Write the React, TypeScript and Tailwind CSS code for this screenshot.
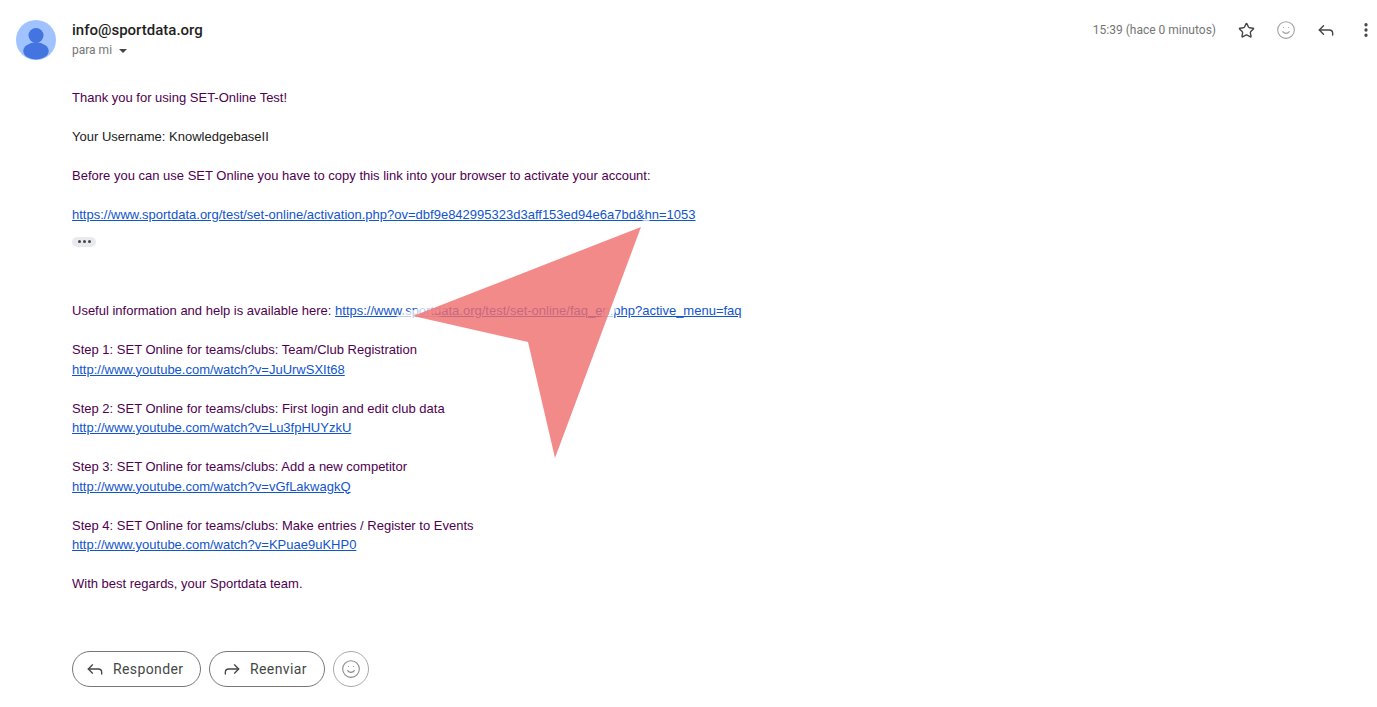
import { MoreVertical, Reply, Smile, Star } from "lucide-react";

const steps = [
  { title: "Step 1: SET Online for teams/clubs: Team/Club Registration", url: "http://www.youtube.com/watch?v=JuUrwSXIt68" },
  { title: "Step 2: SET Online for teams/clubs: First login and edit club data", url: "http://www.youtube.com/watch?v=Lu3fpHUYzkU" },
  { title: "Step 3: SET Online for teams/clubs: Add a new competitor", url: "http://www.youtube.com/watch?v=vGfLakwagkQ" },
  { title: "Step 4: SET Online for teams/clubs: Make entries / Register to Events", url: "http://www.youtube.com/watch?v=KPuae9uKHP0" },
];

const MailLink = ({ href }: { href: string }) => (
  <a href={href} className="text-[#1155cc] underline">
    {href}
  </a>
);

const Avatar = () => (
  <svg width="40" height="40" viewBox="0 0 40 40" className="shrink-0">
    <circle cx="20" cy="20" r="20" fill="#a0c3ff" />
    <circle cx="20" cy="15.5" r="7.5" fill="#4374e0" />
    <ellipse cx="20" cy="31" rx="12.7" ry="8.5" fill="#4374e0" />
  </svg>
);

export default function App() {
  return (
    <div className="relative h-[707px] w-[1377px] overflow-hidden bg-white font-['Roboto',sans-serif]">
      <div className="flex items-start pl-4 pt-5">
        <Avatar />
        <div className="ml-4 flex-1">
          <div className="text-[15px] font-medium leading-5 text-[#1f1f1f]">info@sportdata.org</div>
          <div className="flex items-center text-[12px] leading-5 text-[#757575]">
            para mi
            <span className="ml-[7px] mt-px h-0 w-0 border-x-4 border-t-4 border-x-transparent border-t-[#444746]" />
          </div>
        </div>
        <div className="-mr-[9px] flex h-5 items-center">
          <span className="mr-[10px] text-[12px] text-[#757575]">15:39 (hace 0 minutos)</span>
          <div className="flex w-10 justify-center">
            <Star size={17} strokeWidth={2} className="text-[#444746]" />
          </div>
          <div className="flex w-10 justify-center">
            <Smile size={20} strokeWidth={1.3} className="text-[#a0a0a0]" />
          </div>
          <div className="flex w-10 justify-center">
            <Reply size={20} strokeWidth={1.7} className="text-[#444746]" />
          </div>
          <div className="flex w-10 justify-center">
            <MoreVertical size={18} strokeWidth={2.4} className="text-[#444746]" />
          </div>
        </div>
      </div>

      <div className="mt-[28px] pl-[72px] font-['Liberation_Sans',Arial,sans-serif] text-[13px] leading-[19.5px] text-[#500050]">
        <div>Thank you for using SET-Online Test!</div>
        <div className="mt-[19.5px] text-[#222222]">Your Username: KnowledgebaseII</div>
        <div className="mt-[19.5px]">Before you can use SET Online you have to copy this link into your browser to activate your account:</div>
        <div className="mt-[19.5px]">
          <MailLink href="https://www.sportdata.org/test/set-online/activation.php?ov=dbf9e842995323d3aff153ed94e6a7bd&hn=1053" />
        </div>
        <div className="mt-[12px] flex h-[10px] w-6 items-center justify-center gap-[2px] rounded-full bg-[#e8eaed]">
          <span className="size-[3px] rounded-full bg-[#444746]" />
          <span className="size-[3px] rounded-full bg-[#444746]" />
          <span className="size-[3px] rounded-full bg-[#444746]" />
        </div>
        <div className="mt-[54.5px]">
          Useful information and help is available here: <MailLink href="https://www.sportdata.org/test/set-online/faq_en.php?active_menu=faq" />
        </div>
        {steps.map((step) => (
          <div key={step.url} className="mt-[19.5px]">
            <div>{step.title}</div>
            <MailLink href={step.url} />
          </div>
        ))}
        <div className="mt-[19.5px]">With best regards, your Sportdata team.</div>
      </div>

      <div className="ml-[72px] mt-[57.5px] flex items-center gap-2">
        <button className="flex h-9 w-[129px] items-center rounded-full border border-[#747775] pl-[12px] text-[14px] tracking-[0.4px] text-[#444746]">
          <Reply size={20} strokeWidth={1.6} />
          <span className="ml-[8px]">Responder</span>
        </button>
        <button className="flex h-9 w-[116px] items-center rounded-full border border-[#747775] pl-[12px] text-[14px] tracking-[0.4px] text-[#444746]">
          <Reply size={20} strokeWidth={1.6} className="-scale-x-100" />
          <span className="ml-[8px]">Reenviar</span>
        </button>
        <button className="flex size-9 items-center justify-center rounded-full border border-[#a8a8a8]">
          <Smile size={20} strokeWidth={1.3} className="text-[#8a8a8a]" />
        </button>
      </div>

      <svg width="1377" height="707" viewBox="0 0 1377 707" className="pointer-events-none absolute left-0 top-0">
        <polygon points="641,227 413,316 528,342 555,458" fill="none" stroke="#ffffff" strokeOpacity="0.7" strokeWidth="11" strokeMiterlimit="6" />
        <polygon points="641,227 413,316 528,342 555,458" fill="#ef6d6d" fillOpacity="0.8" />
      </svg>
    </div>
  );
}
